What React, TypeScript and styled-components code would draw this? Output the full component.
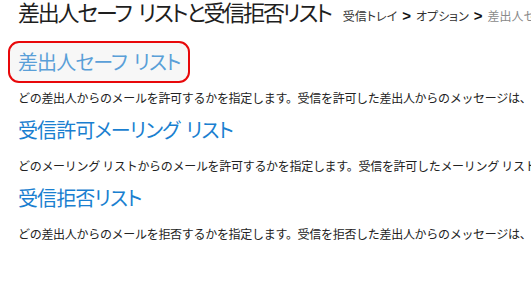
import styled, { createGlobalStyle } from "styled-components"

const GlobalStyle = createGlobalStyle`
    body {
        margin: 0;
        background: #ffffff;
        font-family: "Noto Sans CJK JP", "Noto Sans", sans-serif;
        overflow: hidden;
    }
`

const Page = styled.div`
    width: 531px;
    height: 298px;
    overflow: hidden;
    white-space: nowrap;
`

const Header = styled.div`
    display: flex;
    align-items: baseline;
    padding-left: 18px;
`

const Title = styled.h1`
    margin: 0;
    font-size: 22px;
    line-height: 22px;
    font-weight: 400;
    letter-spacing: -2.2px;
    word-spacing: 5px;
    font-feature-settings: "palt" 1;
    color: #1e1e1e;
`

const Breadcrumb = styled.div`
    display: flex;
    align-items: baseline;
    gap: 5px;
    margin-left: 12px;
    font-size: 12px;
    font-feature-settings: "palt" 1;
    color: #333333;
`

const Crumb = styled.span<{ $current?: boolean }>`
    color: ${(p) => (p.$current ? "#8a8a8a" : "#333333")};
`

const Separator = styled.span`
    font-family: "Liberation Sans", sans-serif;
    font-weight: 700;
    font-size: 15px;
    color: #111111;
`

const Sections = styled.div`
    padding: 17px 0 0 8px;
`

const Section = styled.div`
    display: flex;
    flex-direction: column;
    align-items: flex-start;
`

const ListLink = styled.a<{ $active?: boolean }>`
    display: block;
    padding: 3px 8px;
    border: 2px solid ${(p) => (p.$active ? "#e8080a" : "transparent")};
    border-radius: 11px;
    background: ${(p) => (p.$active ? "#f7f7f7" : "transparent")};
    font-size: 20px;
    line-height: 32px;
    letter-spacing: -0.9px;
    word-spacing: 3px;
    font-feature-settings: "palt" 1;
    color: ${(p) => (p.$active ? "#5a9fd8" : "#1a7fd0")};
    text-decoration: none;
    cursor: pointer;
`

const Description = styled.p`
    margin: 6px 0 2px 10px;
    font-size: 12px;
    line-height: 18px;
    letter-spacing: -0.3px;
    color: #222222;
`

const lists = [
    {
        name: "差出人セーフ リスト",
        text: "どの差出人からのメールを許可するかを指定します。受信を許可した差出人からのメッセージは、迷惑メール フォルダーに移動されません。",
        active: true,
    },
    {
        name: "受信許可メーリング リスト",
        text: "どのメーリング リストからのメールを許可するかを指定します。受信を許可したメーリング リスト宛てのメッセージは、迷惑メール フォルダーに移動されません。",
    },
    {
        name: "受信拒否リスト",
        text: "どの差出人からのメールを拒否するかを指定します。受信を拒否した差出人からのメッセージは、自動的に削除されます。",
    },
]

const App = () => {
    return (
        <Page>
            <GlobalStyle />
            <Header>
                <Title>差出人セーフ リストと受信拒否リスト</Title>
                <Breadcrumb>
                    <Crumb>受信トレイ</Crumb>
                    <Separator>&gt;</Separator>
                    <Crumb>オプション</Crumb>
                    <Separator>&gt;</Separator>
                    <Crumb $current>差出人セーフ リストと受信拒否リスト</Crumb>
                </Breadcrumb>
            </Header>
            <Sections>
                {lists.map((list) => (
                    <Section key={list.name}>
                        <ListLink $active={list.active}>{list.name}</ListLink>
                        <Description>{list.text}</Description>
                    </Section>
                ))}
            </Sections>
        </Page>
    )
}

export default App
